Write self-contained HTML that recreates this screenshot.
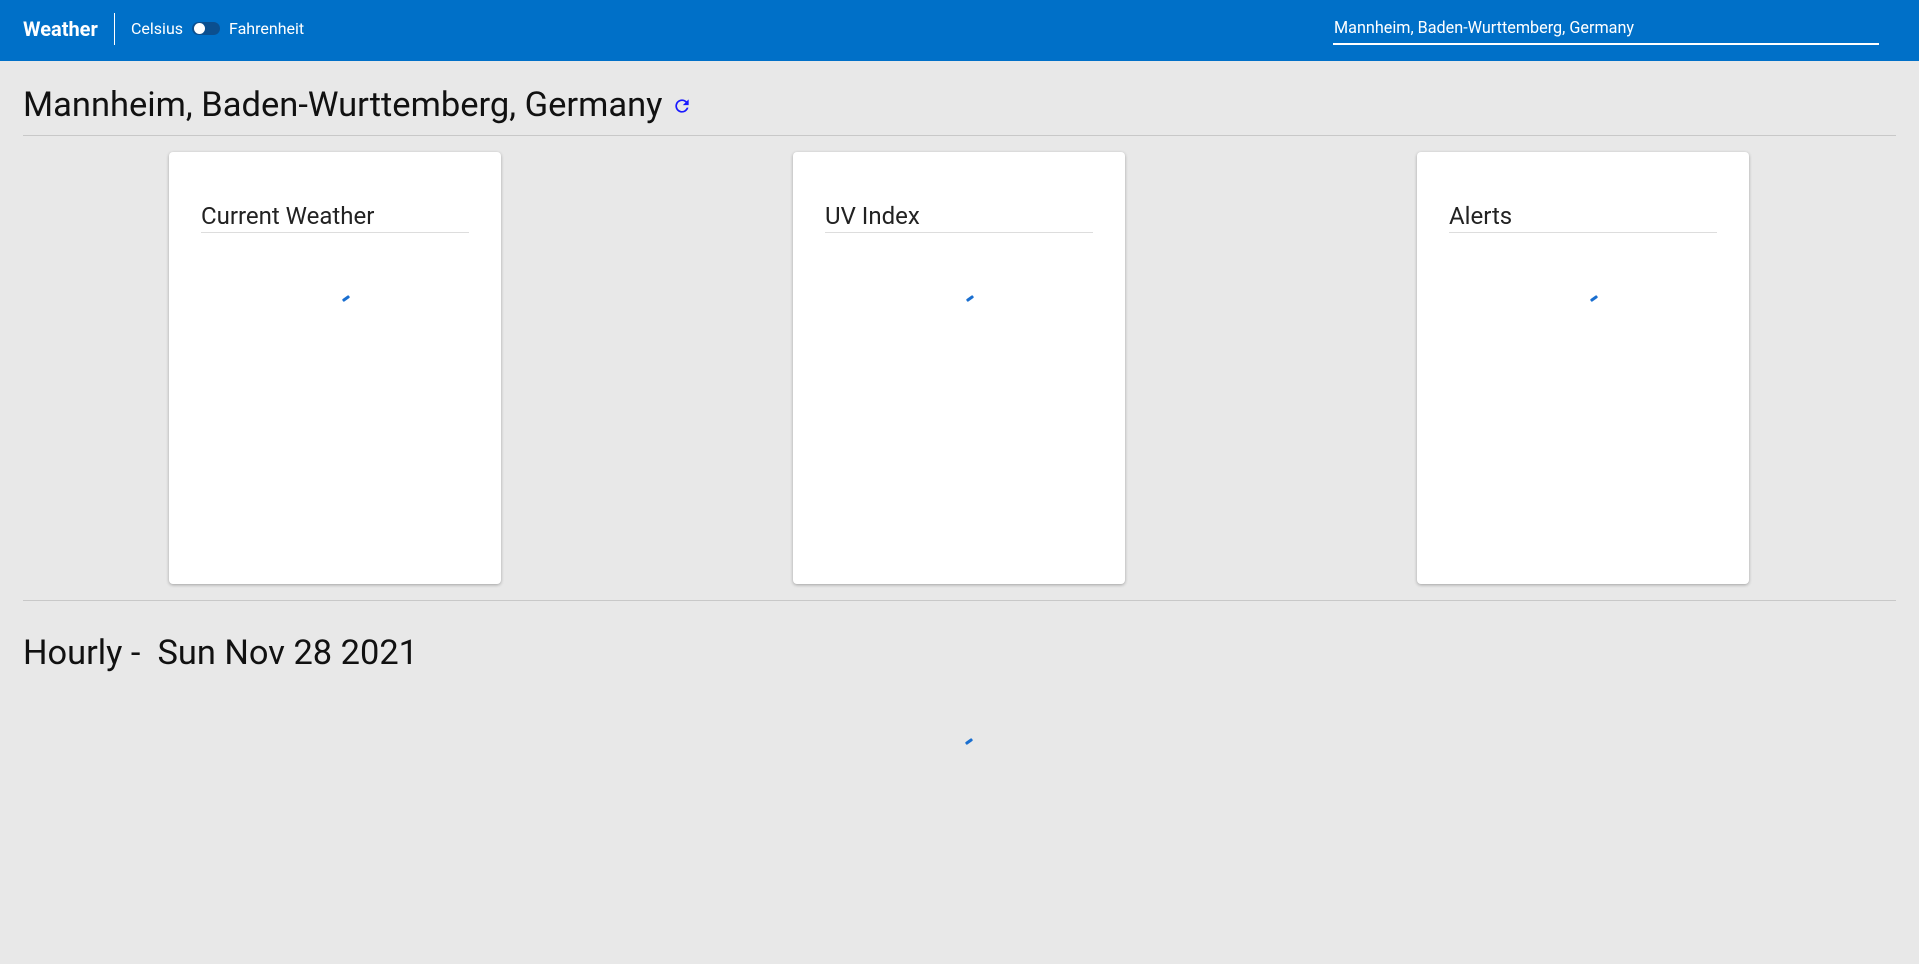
<!DOCTYPE html>
<html><head><style>
*{margin:0;padding:0;box-sizing:border-box}
body{width:1919px;height:964px;background:#e8e8e8;font-family:Roboto,"Liberation Sans",sans-serif;position:relative;overflow:hidden;color:#111}
.hdr{position:absolute;left:0;top:0;width:1919px;height:61px;background:#0070c8;color:#fff}
.abs{position:absolute;white-space:nowrap}
.card{position:absolute;top:152px;width:332px;height:432px;background:#fff;border-radius:4px;box-shadow:0 1px 3px rgba(0,0,0,.3)}
.card .t{position:absolute;left:32px;top:50px;font-size:24px;color:#222}
.card .u{position:absolute;left:32px;top:80px;width:268px;height:1px;background:#ddd}
.sp{position:absolute;width:8px;height:3px;background:#1a6fd0;transform:rotate(-35deg);border-radius:1px}
</style></head><body>
<div class="hdr">
<div class="abs" style="left:23px;top:17px;font-size:20px;font-weight:bold">Weather</div>
<div class="abs" style="left:114px;top:13px;width:1px;height:32px;background:#fff"></div>
<div class="abs" style="left:131px;top:19px;font-size:16px">Celsius</div>
<div class="abs" style="left:192px;top:22px;width:28px;height:13px;border-radius:7px;background:#0b4f8f"></div>
<div class="abs" style="left:194px;top:23px;width:11px;height:11px;border-radius:50%;background:#fff"></div>
<div class="abs" style="left:229px;top:19px;font-size:16px">Fahrenheit</div>
<div class="abs" style="left:1334px;top:18px;font-size:16.2px">Mannheim, Baden-Wurttemberg, Germany</div>
<div class="abs" style="left:1333px;top:43px;width:546px;height:2px;background:#fff"></div>
</div>
<div class="abs" style="left:23px;top:85px;font-size:34.5px;color:#111">Mannheim, Baden-Wurttemberg, Germany</div>
<svg class="abs" style="left:672px;top:96px" width="20" height="20" viewBox="0 0 24 24"><path fill="#1a1aff" d="M17.65 6.35A7.95 7.95 0 0 0 12 4a8 8 0 1 0 7.73 10h-2.08A6 6 0 1 1 12 6c1.66 0 3.14.69 4.22 1.78L13 11h7V4l-2.35 2.35z"/></svg>
<div class="abs" style="left:23px;top:135px;width:1873px;height:1px;background:#c8c8c8"></div>
<div class="card" style="left:169px"><div class="t">Current Weather</div><div class="u"></div><div class="sp" style="left:173px;top:145px"></div></div>
<div class="card" style="left:793px"><div class="t">UV Index</div><div class="u"></div><div class="sp" style="left:173px;top:145px"></div></div>
<div class="card" style="left:1417px"><div class="t">Alerts</div><div class="u"></div><div class="sp" style="left:173px;top:145px"></div></div>
<div class="abs" style="left:23px;top:600px;width:1873px;height:1px;background:#c8c8c8"></div>
<div class="abs" style="left:23px;top:633px;font-size:34.4px;color:#111">Hourly -&nbsp; Sun Nov 28 2021</div>
<div class="sp" style="left:965px;top:740px"></div>
</body></html>
